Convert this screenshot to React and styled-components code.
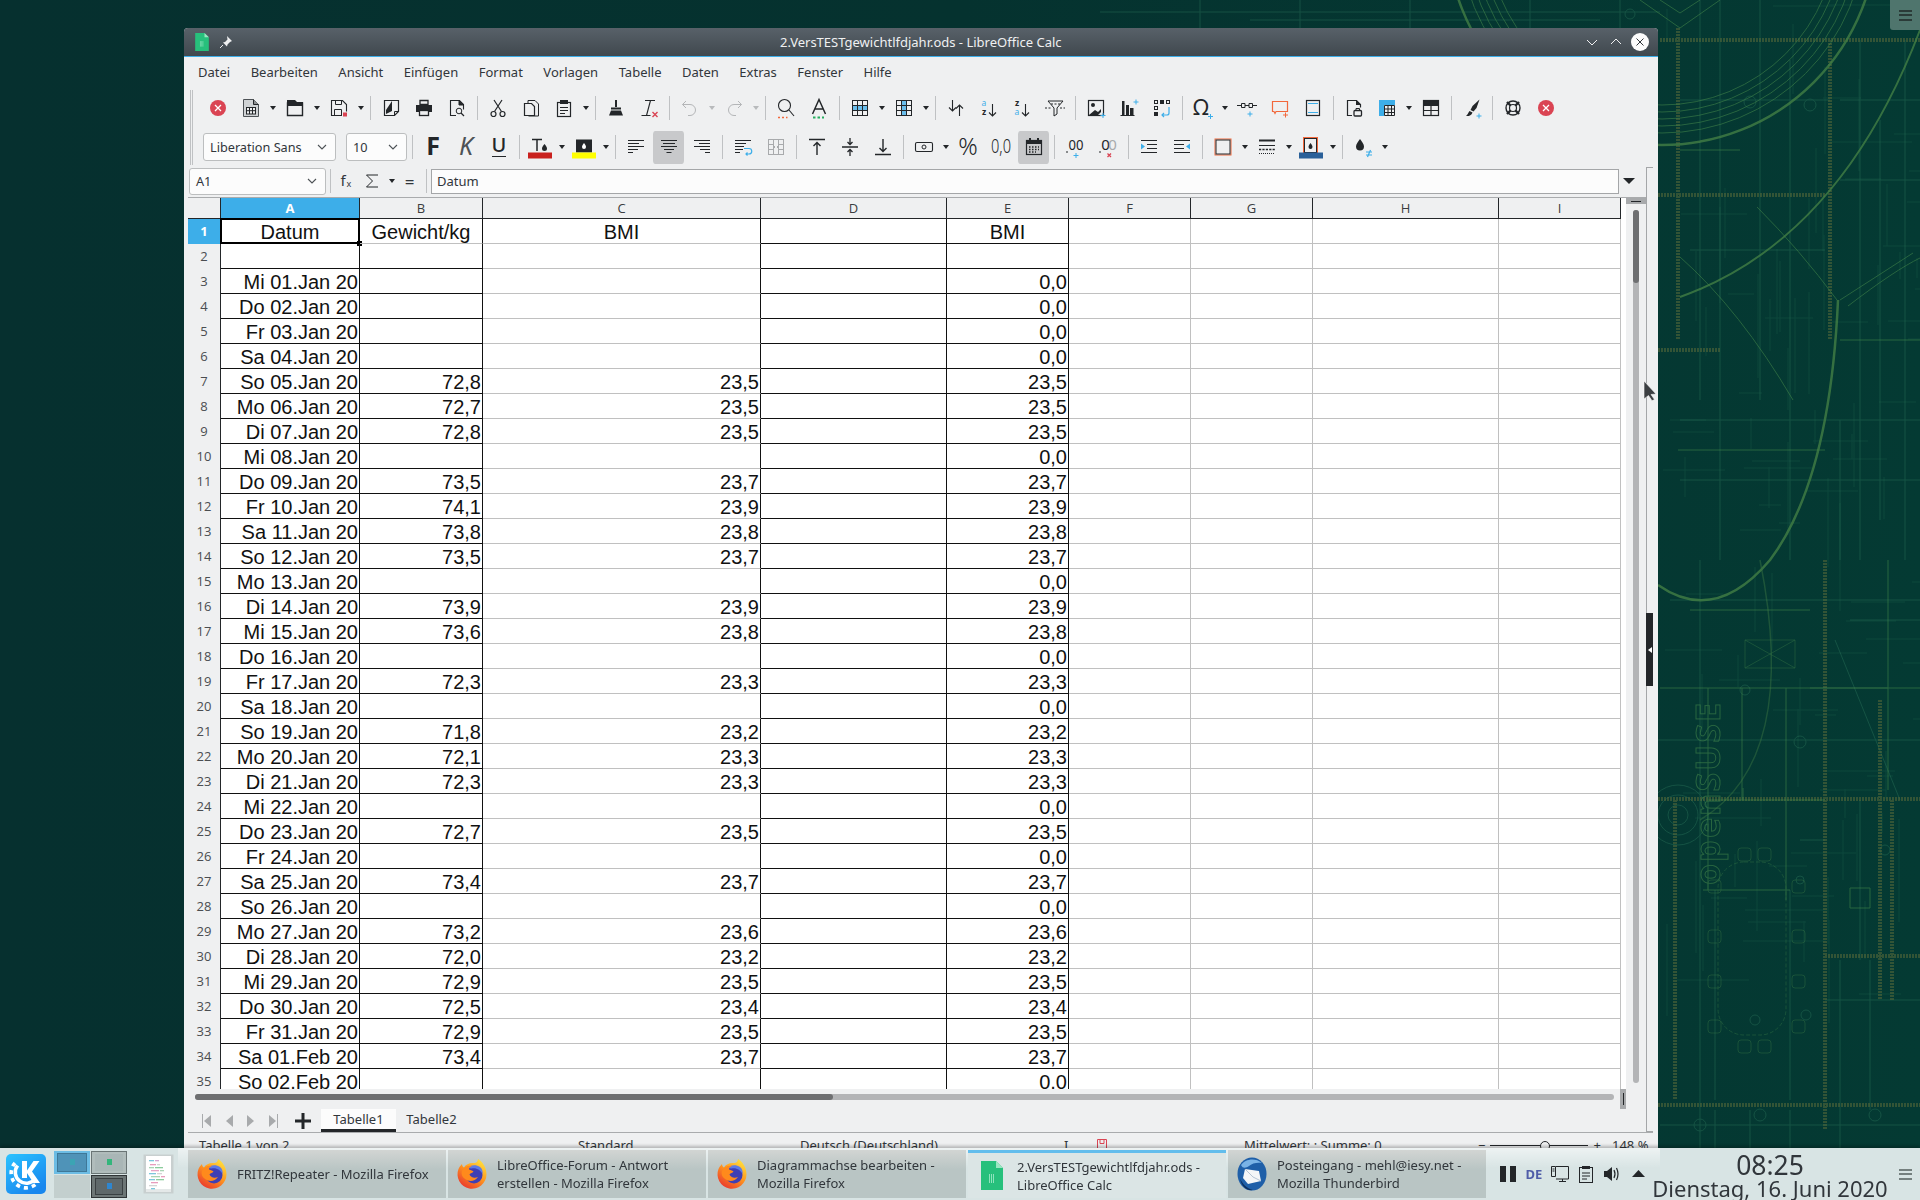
import React from 'react'
import styled, { createGlobalStyle } from 'styled-components'

const GlobalStyle = createGlobalStyle`
  html, body { margin: 0; padding: 0; background: #05322f; }
  * { box-sizing: border-box; }
  body { font-family: "Noto Sans", sans-serif; font-size: 13px; color: #31363b; }
`

const Desktop = styled.div`
  width: 1920px;
  height: 1200px;
  display: flex;
  flex-direction: column;
  overflow: hidden;
`
const Workspace = styled.div`
  position: relative;
  flex: 1;
  overflow: hidden;
  background: linear-gradient(90deg, #06302f 0%, #05322f 50%, #043a33 100%);
`
const Wallpaper = styled.svg`
  position: absolute;
  left: 0;
  top: 0;
  width: 1920px;
  height: 1148px;
`
const Toolbox = styled.div`
  position: absolute;
  right: 0;
  top: 0;
  width: 30px;
  height: 30px;
  background: #4f756d;
  border-bottom-left-radius: 3px;
  display: flex;
  align-items: center;
  justify-content: center;
`
const Bars = styled.div`
  width: 13px;
  height: 11px;
  border-top: 2px solid ${p => p.$color};
  border-bottom: 2px solid ${p => p.$color};
  position: relative;
  &::after {
    content: '';
    position: absolute;
    left: 0;
    right: 0;
    top: 2.5px;
    height: 2px;
    background: ${p => p.$color};
  }
`

/* window */
const Window = styled.div`
  position: absolute;
  left: 184px;
  top: 28px;
  width: 1474px;
  height: 1150px;
  background: #eff0f1;
  border-radius: 4px 4px 0 0;
  display: flex;
  flex-direction: column;
`
const TitleBar = styled.div`
  position: relative;
  flex: 0 0 29px;
  background: linear-gradient(#586169, #40484e);
  border-bottom: 1px solid #3daee9;
  border-radius: 4px 4px 0 0;
  display: flex;
  align-items: center;
  padding-left: 11px;
  gap: 10px;
`
const TitleText = styled.div`
  position: absolute;
  left: 596px;
  top: 4px;
  color: #eff0f1;
  font-size: 13px;
  line-height: 20px;
  white-space: nowrap;
`
const TitleButtons = styled.div`
  margin-left: auto;
  margin-right: 9px;
  display: flex;
  align-items: center;
  gap: 6px;
`
const MenuBar = styled.div`
  flex: 0 0 31px;
  display: flex;
  align-items: center;
  gap: 20.5px;
  padding: 0 0 2px 14px;
  color: #31363b;
`
const ToolbarGroup = styled.div`
  flex: 0 0 75px;
  margin: 2px 0 2px 6px;
  border-left: 3px double #bfc1c3;
`
const Toolbar = styled.div`
  display: flex;
  align-items: center;
  height: ${p => p.$h}px;
  padding-left: ${p => p.$pad}px;
  padding-top: ${p => p.$top || 0}px;
`
const ToolBtn = styled.div`
  flex: 0 0 33px;
  height: 33px;
  display: flex;
  align-items: center;
  justify-content: center;
  border-radius: 3px;
  background: ${p => (p.$on ? '#c8c9cb' : 'transparent')};
  background-clip: padding-box;
  border-left: ${p => (p.$on ? '1px solid #eff0f1' : '0')};
  border-right: ${p => (p.$on ? '1px solid #eff0f1' : '0')};
`
const Drop = styled.div`
  flex: 0 0 11px;
  display: flex;
  justify-content: center;
  &::after {
    content: '';
    border-left: 3.5px solid transparent;
    border-right: 3.5px solid transparent;
    border-top: 4px solid ${p => (p.$off ? '#b8babc' : '#232629')};
  }
`
const Sep = styled.div`
  flex: 0 0 8px;
  height: 24px;
  display: flex;
  justify-content: center;
  &::after {
    content: '';
    width: 1px;
    background: #bfc1c3;
  }
`
const Combo = styled.div`
  flex: 0 0 ${p => p.$w}px;
  height: ${p => p.$h || 28}px;
  margin-right: ${p => p.$mr || 0}px;
  border: 1px solid #bcbebf;
  border-radius: 3px;
  background: #fcfcfc;
  font-size: 12.7px;
  display: flex;
  align-items: center;
  justify-content: space-between;
  padding: 0 8px 0 6px;
`
const Chevron = styled.svg`
  width: 10px;
  height: 6px;
  fill: none;
  stroke: #4d5256;
  stroke-width: 1.1;
`

const Body = styled.div`
  flex: 0 0 965px;
  display: flex;
`
const LeftCol = styled.div`
  width: 1462px;
  display: flex;
  flex-direction: column;
`
const FormulaRow = styled.div`
  flex: 0 0 30px;
  display: flex;
  align-items: center;
  padding: 0 0 2px 5px;
`
const FormulaBtn = styled.div`
  flex: 0 0 ${p => p.$w}px;
  display: flex;
  justify-content: center;
  font-size: ${p => p.$size || 14}px;
  color: #31363b;
`
const FormulaBox = styled.div`
  flex: 0 0 1188px;
  height: 25px;
  margin-left: 1px;
  background: #fcfcfc;
  border: 1px solid #a4a6a8;
  padding-left: 5px;
  line-height: 22px;
`
const ExpandArrow = styled.div`
  margin-left: 4px;
  border-left: 6px solid transparent;
  border-right: 6px solid transparent;
  border-top: 6px solid #232629;
`
const SheetRow = styled.div`
  flex: 0 0 892px;
  display: flex;
  margin-left: 4px;
  border-top: 1px solid #a9abad;
`
const Sheet = styled.div`
  flex: 0 0 1438px;
  height: 891px;
  overflow: hidden;
  background: #fff;
  display: grid;
  grid-template-columns: 33px 139px 123px 278px 186px 122px 122px 122px 186px 122px 5px;
  grid-auto-rows: 25px;
  grid-template-rows: 21px;
  align-content: start;
`
const ColHead = styled.div`
  background: ${p => (p.$on ? '#3daee9' : '#eff0f1')};
  color: ${p => (p.$on ? '#fff' : '#3a3d40')};
  font-weight: ${p => (p.$on ? 700 : 400)};
  border-right: 1px solid #232629;
  border-bottom: 1px solid #232629;
  text-align: center;
  font-size: 13px;
  line-height: 20px;
  font-family: "Open Sans", sans-serif;
`
const RowHead = styled.div`
  background: ${p => (p.$on ? '#3daee9' : '#eff0f1')};
  color: ${p => (p.$on ? '#fff' : '#4a4d50')};
  font-weight: ${p => (p.$on ? 700 : 400)};
  border-right: 1px solid #232629;
  text-align: center;
  font-size: 13px;
  line-height: 25px;
  font-family: "Open Sans", sans-serif;
`
const Cell = styled.div`
  position: relative;
  font-family: "Liberation Sans", sans-serif;
  font-size: 20px;
  line-height: 27px;
  height: 25px;
  color: #111;
  white-space: nowrap;
  text-align: ${p => p.$align || 'right'};
  padding-right: ${p => (p.$align ? 0 : 1)}px;
  border-right: 1px solid ${p => (p.$soft ? '#c0c0c0' : '#111')};
  border-bottom: 1px solid ${p => (p.$softBottom ? '#c0c0c0' : '#111')};
`
const Cursor = styled.div`
  position: absolute;
  left: -1px;
  top: -1px;
  right: -1px;
  bottom: -1px;
  border: 2px solid #000;
  &::after {
    content: '';
    position: absolute;
    right: -4px;
    bottom: -4px;
    width: 5px;
    height: 5px;
    background: #000;
  }
`
const VScroll = styled.div`
  position: relative;
  flex: 0 0 20px;
  background: #eff0f1;
`
const SplitBtn = styled.div`
  height: 6px;
  background: #a8aaac;
  display: flex;
  align-items: center;
  justify-content: center;
  &::after {
    content: '';
    width: 10px;
    height: 1px;
    background: #232629;
  }
`
const VTrack = styled.div`
  width: 6px;
  height: 873px;
  margin: 6px 0 0 7px;
  border-radius: 3px;
  background: #b3b4b6;
`
const VThumb = styled.div`
  height: 73px;
  border-radius: 3px;
  background: #6e6f71;
`
const HScrollRow = styled.div`
  flex: 0 0 20px;
  margin-left: 4px;
  display: flex;
  align-items: center;
  padding: 0 0 5px 7px;
`
const HTrack = styled.div`
  width: 1419px;
  height: 6px;
  border-radius: 3px;
  background: #b3b4b6;
`
const HThumb = styled.div`
  width: 638px;
  height: 6px;
  border-radius: 3px;
  background: #6e6f71;
`
const SplitV = styled.div`
  flex: 0 0 6px;
  height: 20px;
  margin: 0 0 -5px 6px;
  background: #a8aaac;
  display: flex;
  justify-content: center;
  align-items: center;
  &::after {
    content: '';
    width: 1px;
    height: 12px;
    background: #232629;
  }
`
const TabRow = styled.div`
  flex: 0 0 23px;
  display: flex;
  align-items: stretch;
  padding-left: 8px;
  margin-left: 4px;
`
const NavBtn = styled.div`
  flex: 0 0 ${p => p.$w || 22}px;
  display: flex;
  align-items: center;
  justify-content: center;
  transform: ${p => (p.$flip ? 'scaleX(-1)' : 'none')};
`
const Tab = styled.div`
  flex: 0 0 ${p => p.$w}px;
  text-align: center;
  line-height: 20px;
  background: ${p => (p.$on ? '#fcfcfc' : 'transparent')};
  border-bottom: 3px solid ${p => (p.$on ? '#232629' : 'transparent')};
  color: #31363b;
`
const Sidebar = styled.div`
  position: relative;
  width: 7px;
  border: 1px solid #a4a6a8;
  border-right: 0;
`
const DeckHandle = styled.div`
  position: absolute;
  left: -1px;
  top: 445px;
  width: 7px;
  height: 73px;
  background: #232629;
  display: flex;
  align-items: center;
  justify-content: center;
  &::after {
    content: '';
    border-top: 3px solid transparent;
    border-bottom: 3px solid transparent;
    border-right: 4px solid #fff;
  }
`
const StatusBar = styled.div`
  display: flex;
  margin: 0 5px 0 4px;
  border-top: 1px solid #a9abad;
  padding: 3px 0 0 11px;
  line-height: 18px;
  white-space: nowrap;
`
const StatusCell = styled.div`
  flex: 0 0 ${p => p.$w}px;
  display: flex;
  align-items: center;
`
const ZoomLine = styled.div`
  position: relative;
  width: 98px;
  height: 1px;
  margin: 0 5px;
  background: #232629;
  &::after {
    content: '';
    position: absolute;
    left: 50px;
    top: -4px;
    width: 8px;
    height: 8px;
    border: 1px solid #232629;
    border-radius: 50%;
    background: #eff0f1;
  }
`
const MouseCursor = styled.svg`
  position: absolute;
  left: 1643px;
  top: 381px;
  width: 14px;
  height: 20px;
`

/* panel */
const Panel = styled.div`
  position: relative;
  flex: 0 0 52px;
  background: #d8e4e4;
  box-shadow: 0 -2px 3px rgba(0, 0, 0, 0.25);
  display: flex;
  align-items: center;
  padding-left: 6px;
`
const PanelSheen = styled.div`
  position: absolute;
  left: 178px;
  top: 0;
  width: 1482px;
  height: 20px;
  background: linear-gradient(rgba(255, 255, 255, 0.55), rgba(255, 255, 255, 0));
`
const Pager = styled.div`
  position: relative;
  flex: 0 0 73px;
  height: 47px;
  margin-left: 8px;
  display: grid;
  grid-template-columns: 36px 36px;
  grid-template-rows: 23px 23px;
  gap: 1px;
`
const Desk = styled.div`
  background: ${p => p.$bg};
  border: ${p => (p.$border ? `1px solid ${p.$border}` : '0')};
  padding: ${p => (p.$pad ? '2px 3px' : 0)};
  display: flex;
  align-items: center;
  justify-content: center;
`
const DeskWindow = styled.div`
  width: 100%;
  height: 100%;
  background: ${p => p.$bg};
  border: 1px solid ${p => p.$border};
  display: flex;
  align-items: center;
  justify-content: center;
  &::after {
    content: '';
    width: 5px;
    height: 6px;
    background: ${p => p.$dot};
  }
`
const NotesBox = styled.div`
  position: relative;
  margin-left: 16px;
`
const Tasks = styled.div`
  position: relative;
  flex: 0 0 1298px;
  margin-left: 14px;
  display: flex;
  gap: 2px;
`
const Task = styled.div`
  flex: 0 0 258px;
  height: 48px;
  display: flex;
  align-items: center;
  gap: 10px;
  padding-left: 9px;
  line-height: 18px;
  color: #31363b;
  background: ${p => (p.$on ? '#dbe5e5' : 'linear-gradient(#d2d5d3, #b9c5c4 40%)')};
  border-top: ${p => (p.$on ? '3px solid #62bdec' : '0')};
`
const TaskIconBox = styled.div`
  flex: 0 0 30px;
  display: flex;
  justify-content: center;
`
const Tray = styled.div`
  position: relative;
  flex: 0 0 156px;
  margin-left: 9px;
  display: flex;
`
const TrayItem = styled.div`
  flex: 0 0 26px;
  display: flex;
  justify-content: center;
  align-items: center;
  height: 24px;
  font-size: 13px;
  font-weight: 700;
  color: #4f5da8;
`
const Clock = styled.div`
  position: relative;
  flex: 0 0 240px;
  align-self: flex-start;
  padding-top: 5px;
  text-align: center;
  color: #31363b;
  white-space: nowrap;
  margin-left: -1px;
`
const ClockTime = styled.div`
  font-size: 26.5px;
  line-height: 24px;
`
const ClockDate = styled.div`
  font-size: 22px;
  line-height: 22px;
`
const PanelMenu = styled.div`
  flex: 0 0 31px;
  display: flex;
  justify-content: center;
`

/* toolbar icons, all on a 24 grid */
const Svg = styled.svg`
  width: ${p => p.$w || 24}px;
  height: ${p => p.$h || 24}px;
  fill: none;
  stroke: #232629;
  stroke-width: 1;
  display: block;
  flex: none;
  overflow: visible;
`
const D = '#232629'
const B = '#3daee9'
const R = '#da4453'
const O = '#f2683c'
const Plus = ({ x = 19, y = 20, c = B }) => <path d={`M${x - 2.5} ${y}h5M${x} ${y - 2.5}v5`} stroke={c} />
const Lines = ({ rows }) => rows.map(([x, y, w], i) => <path key={i} d={`M${x} ${y}h${w}`} />)
const T = ({ x = 12, y = 18, s = 18, w, c = D, f, children, ...r }) => (
  <text x={x} y={y} fontSize={s} fontWeight={w} fill={c} stroke="none" textAnchor="middle" fontFamily={f || '"Noto Sans", sans-serif'} {...r}>
    {children}
  </text>
)
const Table = ({ hatch }) => (
  <>
    {hatch === 'row' && <rect x="4" y="9" width="16" height="6" fill={B} opacity=".75" stroke="none" />}
    {hatch === 'col' && <rect x="9" y="4" width="6" height="16" fill={B} opacity=".75" stroke="none" />}
    <rect x="4.5" y="4.5" width="15" height="15" />
    <path d="M4.5 9.5h15M4.5 14.5h15M9.5 4.5v15M14.5 4.5v15" />
  </>
)
const CloseIcon = () => (
  <>
    <circle cx="12" cy="12" r="8" fill={R} stroke="none" />
    <path d="M9 9l6 6M15 9l-6 6" stroke="#fff" strokeWidth="1.3" />
  </>
)

const icons = {
  close: <CloseIcon />,
  newCalc: (
    <>
      <path d="M4.5 3.5h10l5 5v12h-15z" fill="#d0d3d5" stroke="#4d5256" />
      <path d="M14.5 3.5v5h5" fill="#8d9092" />
      <rect x="7.5" y="11.5" width="9" height="6.5" fill="#eff0f1" />
      <path d="M7.5 14.7h9M10.5 11.5v6.5M13.5 11.5v6.5" />
    </>
  ),
  open: (
    <>
      <path d="M4.5 7h15v12.5h-15z" strokeWidth="1.4" />
      <path d="M4 4h8l2 2h6v4H4z" fill={D} stroke="none" />
    </>
  ),
  save: (
    <>
      <path d="M15 19.5H4.5v-15h11l4 4v7" strokeWidth="1.1" />
      <path d="M8.500 4.500v4h6v-4M7.500 19.500v-6h7v6" />
      <rect x="16" y="16.5" width="4" height="4" fill={R} stroke="none" />
    </>
  ),
  export: (
    <>
      <path d="M5.5 4.5h14v11l-4 4h-10z" strokeWidth="1.2" />
      <path d="M7 14l6-9v10l-6 3z" fill={D} stroke="none" />
      <path d="M15.5 19.5v-4h4" />
    </>
  ),
  print: (
    <>
      <path d="M8 4.5h8v4H8z" strokeWidth="1.3" />
      <path d="M4 9h16v7H4z" fill={D} stroke="none" />
      <rect x="7.5" y="14.5" width="9" height="5" fill="#eff0f1" strokeWidth="1.3" />
    </>
  ),
  preview: (
    <>
      <path d="M11 19.500H5.500v-15h9l4 4v5" strokeWidth="1.1" />
      <path d="M14 4.500v4.500h4.500z" fill={D} />
      <circle cx="14" cy="15" r="2.8" />
      <path d="M16 17l3 3" strokeWidth="1.3" />
    </>
  ),
  cut: (
    <>
      <circle cx="7.5" cy="18" r="2.5" strokeWidth="1.2" />
      <circle cx="16.5" cy="18" r="2.5" strokeWidth="1.2" />
      <path d="M8.5 15.5L16 4M15.5 15.5L8 4" strokeWidth="1.2" />
    </>
  ),
  copy: (
    <>
      <path d="M9 8V4.5h7l3.5 3.5v12H9.5" />
      <path d="M5.5 7.5h7l3 3v9h-10z" fill="#eff0f1" strokeWidth="1.2" />
    </>
  ),
  paste: (
    <>
      <rect x="5.5" y="6.5" width="13" height="14" strokeWidth="1.2" />
      <path d="M8 4h8v4H8z" fill={D} stroke="none" />
      <path d="M8 11.5h8M8 14.5h8M8 17.5h5" />
    </>
  ),
  clone: (
    <>
      <path d="M11 4h2v7h-2z" fill={D} stroke="none" />
      <path d="M7 11.5h10v2H7zM7 14.5h10l2 5H5z" fill={D} stroke="none" />
    </>
  ),
  clear: (
    <>
      <path d="M8 4.5h10M13.5 4.5l-4 15M4.5 19.5h9" strokeWidth="1.1" />
      <path d="M15.5 16l5 5M20.5 16l-5 5" stroke={R} strokeWidth="1.4" />
    </>
  ),
  undo: <path d="M8 5L4.5 8.5 8 12M4.5 8.5H12a5.5 5.5 0 0 1 0 11H10" stroke="#b4b6b8" />,
  redo: <path d="M16 5l3.5 3.5L16 12M19.5 8.5H12a5.5 5.5 0 0 0 0 11h2" stroke="#b4b6b8" />,
  find: (
    <>
      <circle cx="10.5" cy="9.5" r="6" strokeWidth="1.1" />
      <path d="M15 14l5 6" strokeWidth="1.1" />
      <path d="M4 21.5h9.500" stroke={O} strokeDasharray="2 2" strokeWidth="1.6" />
    </>
  ),
  fontwork: (
    <>
      <path d="M5.5 18L12 3.500 18.500 18M8 13h8" strokeWidth="1.5" />
      <path d="M6 21.5h11" stroke="#27ae60" strokeDasharray="2.5 2" strokeWidth="1.8" />
    </>
  ),
  rows: <Table hatch="row" />,
  cols: <Table hatch="col" />,
  sort: <path d="M8.5 4v11M5 11.5l3.5 3.5 3.5-3.5M15.5 20V9M12 12.5L15.5 9l3.500 3.500" strokeWidth="1.1" />,
  sortAz: (
    <>
      <T x={7} y={10} s={8.5} c={B}>a</T>
      <T x={7} y={19} s={8.5} w={700}>z</T>
      <path d="M15.5 8v12M12 16.500l3.500 3.500 3.500-3.500" strokeWidth="1.1" />
    </>
  ),
  sortZa: (
    <>
      <T x={7} y={10} s={8.5} w={700}>z</T>
      <T x={7} y={19} s={8.5} c={B}>a</T>
      <path d="M15.5 8v12M12 16.500l3.500 3.500 3.500-3.500" strokeWidth="1.1" />
    </>
  ),
  filter: (
    <>
      <path d="M5 5h15l-6 7v6l-3 2v-8z" />
      <path d="M8 8h9M2 12h6M17 12h5" strokeDasharray="2 1.5" />
    </>
  ),
  image: (
    <>
      <rect x="4.5" y="4.5" width="15" height="15" strokeWidth="1.2" />
      <circle cx="9" cy="9" r="2" fill={D} stroke="none" />
      <path d="M5 19l6-5 3 2 3-3v3l-3 3z" fill={D} stroke="none" />
      <Plus x={19} y={19.5} />
    </>
  ),
  chart: (
    <>
      <path d="M3.5 19.5h14" />
      <path d="M5 5h2.500v14H5zM9 9h3v10H9zM13 12h3.500v7H13z" fill={D} stroke="none" />
      <Plus x={19} y={6} />
    </>
  ),
  pivot: (
    <>
      <rect x="4.5" y="4.5" width="3" height="3" />
      <rect x="10" y="4" width="4" height="4" fill={D} stroke="none" />
      <rect x="16.5" y="4.5" width="3" height="3" />
      <rect x="4.5" y="10.5" width="3" height="3" />
      <rect x="4" y="16" width="4" height="4" fill={D} stroke="none" />
      <path d="M19 11v6a2 2 0 0 1-2 2h-5M14 17l-2 2 2 2" stroke={B} strokeWidth="1.2" />
    </>
  ),
  omega: (
    <>
      <T x={10} y={19} s={22}>Ω</T>
      <Plus x={19.5} y={20.5} />
    </>
  ),
  link: (
    <>
      <path d="M2 9.5h4M10 9.5h4M18 9.5h4M6.500 7.500h3.500v4H6.500zM14 7.500h3.500v4H14z" />
      <Plus x={15} y={18} />
    </>
  ),
  comment: (
    <>
      <path d="M4.5 5.5h15v10H8l-1 2-1-2H4.500z" stroke={O} strokeWidth="1.2" />
      <Plus x={17.5} y={19} c={O} />
    </>
  ),
  header: (
    <>
      <rect x="5.5" y="4.5" width="13" height="15" strokeWidth="1.2" />
      <path d="M7 7.5h10M7 16.5h10" stroke={B} />
    </>
  ),
  docLock: (
    <>
      <path d="M10 19.500H5.500v-15h9l4 4v3" strokeWidth="1.2" />
      <path d="M14 4v5h5z" fill={D} stroke="none" />
      <rect x="12" y="14.5" width="7.5" height="5.5" rx="1" strokeWidth="1.3" />
      <path d="M14 14.5v-2h3.500v2" />
    </>
  ),
  table: (
    <>
      <path d="M4 4h16v5H9v11H4z" fill={B} stroke="none" />
      <path d="M9.500 9.500h10v10h-10zM13 9.500v10M16.500 9.500v10M9.500 13h10M9.500 16.500h10" />
    </>
  ),
  freeze: (
    <>
      <rect x="4" y="4" width="16" height="6" fill={D} stroke="none" />
      <rect x="4.5" y="4.5" width="15" height="15" strokeWidth="1.2" />
      <path d="M4.5 14.5h15M12 10v9.500" strokeWidth="1.2" />
    </>
  ),
  brush: (
    <>
      <path d="M19.5 3.5l-7 6.500-2 4 3 1.500 3-3.500z" fill={D} stroke="none" />
      <path d="M9.5 15l3 1.500c-1 3-4 4-6.500 3.500 1.500-1 2-3 3.500-5z" fill={D} stroke="none" />
      <Plus x={19} y={20} />
    </>
  ),
  help: (
    <>
      <circle cx="12" cy="12" r="7" strokeWidth="1.4" />
      <circle cx="12" cy="12" r="3.5" strokeWidth="1.2" />
      <path d="M6 6l3.500 3.500M18 6l-3.500 3.500M6 18l3.500-3.500M18 18l-3.500-3.500" strokeWidth="2.4" />
    </>
  ),
  bold: <T x={12} y={20} s={25} w={700}>F</T>,
  italic: <T x={12} y={20} s={25} fontStyle="italic" fill="#4d5256">K</T>,
  underline: (
    <>
      <T x={12} y={17} s={20} w={500}>U</T>
      <path d="M5 21.5h14" />
    </>
  ),
  fontColor: (
    <>
      <path d="M4 4.5h10M9 4.500V16" strokeWidth="1.5" />
      <path d="M16.5 9c1.500 2 2.500 3 2.500 4.500a2.500 2.500 0 0 1-5 0c0-1.500 1-2.500 2.500-4.500z" fill={D} stroke="none" />
      <rect x="0" y="17.5" width="24" height="6" fill="#c9211e" stroke="none" />
    </>
  ),
  highlight: (
    <>
      <rect x="4" y="4.5" width="16" height="13" fill={D} stroke="none" />
      <path d="M12 8c1 1.500 2 2.500 2 4a2 2 0 0 1-4 0c0-1.500 1-2.500 2-4z" fill="#fff" stroke="none" />
      <rect x="0" y="17.5" width="24" height="6" fill="#ffff00" stroke="none" />
    </>
  ),
  left: <Lines rows={[[4, 5.5, 16], [4, 8.5, 11], [4, 11.5, 16], [4, 14.5, 10], [4, 17.5, 5]]} />,
  center: <Lines rows={[[4, 5.5, 16], [6, 8.5, 12], [4, 11.5, 16], [7, 14.5, 10], [9.5, 17.5, 5]]} />,
  right: <Lines rows={[[4, 5.5, 16], [9, 8.5, 11], [4, 11.5, 16], [10, 14.5, 10], [15, 17.5, 5]]} />,
  wrap: (
    <>
      <Lines rows={[[4, 5.5, 16], [4, 8.5, 11], [4, 11.5, 9], [4, 14.5, 8], [4, 17.5, 5]]} />
      <path d="M13 13.5h5a2 2 0 0 1 0 5.500h-3M16.500 17.500L15 19l1.500 1.500" stroke={B} strokeWidth="1.2" />
    </>
  ),
  merge: (
    <>
      <rect x="4.5" y="4.5" width="15" height="15" stroke="#a8aaac" />
      <path d="M4.500 9.500h5M14.500 9.500h5M4.500 14.500h5M14.500 14.500h5M9.500 4.500v15M14.500 4.500v15" stroke="#a8aaac" />
      <path d="M11 12h-1M13 12h1" stroke="#a8aaac" strokeWidth="2" />
    </>
  ),
  top: <path d="M4 4.500h16M12 20V7.500M8.500 11L12 7.500l3.500 3.500" strokeWidth="1.4" />,
  middle: <path d="M4 12h16M12 3v6.500M9.500 7l2.500 2.500L14.500 7M12 21v-6.500M9.500 17l2.500-2.500 2.500 2.500" strokeWidth="1.3" />,
  bottom: <path d="M4 19.500h16M12 4v12.500M8.500 13l3.500 3.500 3.500-3.500" strokeWidth="1.4" />,
  currency: (
    <>
      <rect x="3.5" y="7.5" width="17" height="9" rx="1.5" strokeWidth="1.1" />
      <circle cx="12" cy="12" r="2" />
    </>
  ),
  percent: <T x={12} y={20} s={24} fontWeight={300}>%</T>,
  number: <T x={12} y={18} s={20} fontWeight={300} textLength="20" lengthAdjust="spacingAndGlyphs">0,0</T>,
  date: (
    <>
      <rect x="4.5" y="5.5" width="15" height="14" strokeWidth="1.2" />
      <path d="M4 5h16v4H4zM7 3h2v3H7zM15 3h2v3h-2z" fill={D} stroke="none" />
      <path d="M7 12h10M7 14.500h10M7 17h7" strokeDasharray="1.5 1.5" strokeWidth="1.4" />
    </>
  ),
  addDec: (
    <>
      <T x={13} y={15} s={15} textLength="15" lengthAdjust="spacingAndGlyphs">00</T>
      <path d="M4 18v-2" />
      <Plus x={13} y={20.5} />
    </>
  ),
  delDec: (
    <>
      <T x={9.5} y={15} s={15}>0</T>
      <T x={16.5} y={15} s={15} c="#a8aaac">0</T>
      <path d="M4 18v-2" />
      <path d="M11.500 18.500l3.500 3.500M15 18.500L11.500 22" stroke={R} strokeWidth="1.3" />
    </>
  ),
  indent: (
    <>
      <Lines rows={[[4, 5.5, 16], [10, 9.5, 10], [10, 13.5, 10], [4, 17.5, 16]]} />
      <path d="M4 8.500l4 3-4 3z" fill={B} stroke="none" />
    </>
  ),
  dedent: (
    <>
      <Lines rows={[[4, 5.5, 16], [4, 9.5, 10], [4, 13.5, 10], [4, 17.5, 16]]} />
      <path d="M20 8.500l-4 3 4 3z" fill={B} stroke="none" />
    </>
  ),
  border: (
    <>
      <rect x="4" y="4" width="16" height="16" fill="#eff0f1" stroke={O} strokeWidth="1" />
      <rect x="5" y="5" width="14" height="14" strokeWidth="1" />
    </>
  ),
  lineStyle: (
    <>
      <path d="M4 5.500h16" strokeWidth="2" />
      <path d="M4 10.500h16" />
      <path d="M4 14.500h16" strokeWidth="1.5" strokeDasharray="2.2 1.2" />
      <path d="M4 18.500h16" strokeDasharray="1 1" />
    </>
  ),
  bgColor: (
    <>
      <rect x="4.5" y="2.5" width="14" height="16" stroke={O} strokeWidth="1" />
      <rect x="5.5" y="3.5" width="12" height="14" />
      <path d="M11.500 8c1 1.500 2 2.500 2 4a2 2 0 0 1-4 0c0-1.500 1-2.500 2-4z" fill={D} stroke="none" />
      <rect x="0" y="17.5" width="24" height="6" fill="#2a6099" stroke="none" />
    </>
  ),
  cond: (
    <>
      <path d="M9 4c2 3 4 5 4 7.500a4 4 0 0 1-8 0C5 9 7 7 9 4z" fill={D} stroke="none" />
      <path d="M15 17h6M15 20h6M19.500 15l-3 7" stroke={B} strokeWidth="1.2" />
    </>
  ),
}

const Tool = ({ name, on }) => (
  <ToolBtn $on={on}>
    <Svg viewBox="0 0 24 24">{icons[name]}</Svg>
  </ToolBtn>
)

const bar1 = [
  'close', 'newCalc', 'v', 'open', 'v', 'save', 'v', '|', 'export', 'print', 'preview', '|', 'cut', 'copy', 'paste', 'v', '|',
  'clone', 'clear', '|', 'undo', 'o', 'redo', 'o', '|', 'find', 'fontwork', '|', 'rows', 'v', 'cols', 'v', '|', 'sort', 'sortAz',
  'sortZa', 'filter', '|', 'image', 'chart', 'pivot', '|', 'omega', 'v', 'link', 'comment', 'header', '|', 'docLock', 'table', 'v',
  'freeze', '|', 'brush', '|', 'help', 'close',
]
const bar2 = [
  '|', 'bold', 'italic', 'underline', '|', 'fontColor', 'v', 'highlight', 'v', '|', 'left', 'center*', 'right', '|', 'wrap', 'merge',
  '|', 'top', 'middle', 'bottom', '|', 'currency', 'v', 'percent', 'number', 'date*', '|', 'addDec', 'delDec', '|', 'indent', 'dedent',
  '|', 'border', 'v', 'lineStyle', 'v', 'bgColor', 'v', '|', 'cond', 'v',
]
const renderBar = items =>
  items.map((it, i) => {
    if (it === '|') return <Sep key={i} />
    if (it === 'v') return <Drop key={i} />
    if (it === 'o') return <Drop key={i} $off />
    const on = it.endsWith('*')
    return <Tool key={i} name={on ? it.slice(0, -1) : it} on={on} />
  })

const ChevronDown = () => (
  <Chevron viewBox="0 0 10 6">
    <path d="M1 1l4 4 4-4" />
  </Chevron>
)

const CalcIcon = ({ w, h }) => (
  <Svg $w={w} $h={h} viewBox="0 0 22 29">
    <path d="M0 0h15l7 7v22H0z" fill="#27c07c" stroke="none" />
    <path d="M15 0l7 7h-7z" fill="#9be6c2" stroke="none" />
    <path d="M8.500 13v9M10.500 13v9M12.500 13v9" stroke="#8fe3bd" strokeWidth="1" />
  </Svg>
)
const Firefox = () => (
  <Svg $w={30} $h={32} viewBox="0 0 30 32">
    <defs>
      <linearGradient id="ffOuter" x1="0.8" y1="0.1" x2="0.2" y2="1">
        <stop offset="0" stopColor="#ffd83a" />
        <stop offset="0.4" stopColor="#ff9a1f" />
        <stop offset="1" stopColor="#e8322f" />
      </linearGradient>
    </defs>
    <path d="M21 1c5 3 8.500 9 8.500 15.500A14.500 14.500 0 1 1 1.500 11c1-2 2-3.500 3.500-5 0 2 1 3 2 3.500C9 6 13 4.500 17 5c2 .2 4-1.500 4-4z" fill="url(#ffOuter)" stroke="none" />
    <circle cx="17" cy="17" r="8.500" fill="#3f3fb4" stroke="none" />
    <path d="M10 10c3-3 9-4 13-1 2 1.500 3 4 2.500 7-2-4-6-6.500-11-5.500z" fill="#5d7be6" stroke="none" />
    <path d="M5 13c2-4 6-6 10-5-2 1-3.500 2-3 3.500 2 1 4 1 4.500 2-1 1.500-3 1.500-4 3 1 3 5 4 8.500 2.500-3 4.500-9 5-13 2C5 19 4 16 5 13z" fill="#ff8a1c" stroke="none" />
  </Svg>
)
const Thunderbird = () => (
  <Svg $w={30} $h={34} viewBox="0 0 30 34">
    <ellipse cx="15" cy="17" rx="14.5" ry="16.5" fill="#1f5fa8" stroke="none" />
    <path d="M4 8c4-6 14-8 21-2-4-1-10 0-13 3-3 2-6 3-8-1z" fill="#7ab3e6" stroke="none" />
    <path d="M8 12l14 2 2 10-13 3-5-6z" fill="#f4f6f8" stroke="none" />
    <path d="M8 12l8 8 8 4" stroke="#b5c4d4" />
    <path d="M3 22c3 5 6 9 13 11-6 1-11-3-13-11z" fill="#0e2f5c" stroke="none" />
  </Svg>
)
const KdeLogo = () => (
  <Svg $w={40} $h={40} viewBox="0 0 40 40">
    <defs>
      <linearGradient id="kdeBg" x1="0" y1="0" x2="0.6" y2="1">
        <stop offset="0" stopColor="#2bc3ff" />
        <stop offset="1" stopColor="#1887ee" />
      </linearGradient>
    </defs>
    <rect x="0" y="0" width="40" height="40" rx="5" fill="url(#kdeBg)" stroke="none" />
    <path d="M11.600 11.500A10.500 10.500 0 1 0 29 25" stroke="#fff" strokeWidth="3.6" />
    <path d="M9 9A14 14 0 1 0 31 29" stroke="#fff" strokeWidth="3.6" strokeDasharray="4 4" />
    <path d="M16 7h5v9.500L27.500 7h6L26 17.500 34 29h-6.500L21 19v5h-5z" fill="#fff" stroke="none" />
  </Svg>
)
const Notes = () => (
  <Svg $w={31} $h={40} viewBox="0 0 31 40">
    <rect x="0.5" y="0.5" width="30" height="39" fill="#c8cfcf" stroke="none" />
    <rect x="3" y="2" width="25" height="33" fill="#fff" stroke="none" />
    <rect x="3" y="35" width="25" height="3" fill="#e4e8e8" stroke="none" />
    {[
      [6, 6, 5, '#7cc6dc'], [12, 6, 4, '#d4a6d0'], [7, 10, 6, '#e79cbc'], [14, 10, 3, '#d4d4d4'], [6, 13, 5, '#a9d4b4'],
      [12, 13, 8, '#8bcc9c'], [8, 16, 8, '#e6a5c6'], [17, 16, 4, '#a9d4b4'], [6, 19, 7, '#7cc6dc'], [14, 19, 5, '#d4d4d4'],
      [8, 22, 9, '#a9d4b4'], [18, 22, 4, '#e79cbc'], [6, 25, 6, '#7cc6dc'], [13, 25, 8, '#8bcc9c'], [8, 28, 7, '#e79cbc'],
      [6, 31, 8, '#d4d4d4'], [8, 34, 4, '#7cc6dc'],
    ].map(([x, y, w, c], i) => (
      <rect key={i} x={x} y={y} width={w} height="1.3" fill={c} stroke="none" />
    ))}
  </Svg>
)

const WALL = '#5a6b3a'
const GREEN = '#468a4c'
const FAINT = '#2f7a5e'
const walls = [
  'M1660 40H1920', 'M1678 28V340', 'M1830 40V340', 'M1658 195H1825', 'M1825 560V1130', 'M1675 800V1100', 'M1658 1105H1920',
  'M1658 799H1920', 'M1825 956H1920', 'M1892 800V1000', 'M1658 350H1720', 'M1900 0V30', 'M1880 700V1000',
]
const greens = [
  'M1660 688H1888', 'M1742 688V800', 'M1708 688V890', 'M1703 890H1790', 'M1708 800H1825', 'M1810 688H1920', 'M1888 560V790',
  'M1740 150H1680', 'M1640 0L1680 28L1720 0', 'M1660 0L1680 13L1700 0', 'M1757 207Q1800 250 1837 300', 'M1840 300L1913 253',
  'M1680 257Q1740 310 1793 400', 'M1848 306Q1895 270 1920 258', 'M1840 340H1920', 'M1678 450H1825',
  'M1690 610H1810', 'M1743 788V800', 'M1786 688V900',
]
const faints = [
  'M1700 0V400', 'M1720 0V560', 'M1760 0V400', 'M1790 60V560', 'M1860 40V560', 'M1880 120V520', 'M1905 40V560', 'M1680 100H1830',
  'M1690 250H1825', 'M1840 100H1920', 'M1840 180H1920', 'M1680 420H1920', 'M1680 480H1920', 'M1840 420V560', 'M1670 600H1920',
  'M1700 560V1148', 'M1715 890V1100', 'M1790 890V1100', 'M1750 1110V1148', 'M1790 1110V1148', 'M1715 1110V1148', 'M1840 960V1148',
  'M1870 960V1110', 'M1658 740H1920', 'M1825 1000H1920', 'M1660 1125H1920', 'M1200 0V28', 'M1300 0V28', 'M1410 0V28', 'M1530 0V28',
  'M1620 0V28', 'M1100 12H1660', 'M1250 20H1600', 'M1860 800V960', 'M1850 620H1920', 'M1800 840H1825', 'M1835 640L1900 800',
]
// thin drafting lines, a seeded run so the picture stays the same on every load
const fine = []
let seed = 17
const next = n => {
  seed = (seed * 137 + 59) % 1009
  return seed % n
}
for (let i = 0; i < 110; i++) {
  const x = 1660 + next(260)
  const y = next(1148)
  fine.push(i % 2 ? `M${x} ${y}h${20 + next(70)}` : `M${x} ${y}v${20 + next(90)}`)
}
const chairs = [
  [1708, 880], [1708, 930], [1708, 975], [1708, 1020], [1792, 880], [1792, 930], [1792, 975], [1792, 1020], [1738, 1040], [1758, 1040],
  [1738, 848], [1758, 848],
]
const rings = [
  [1678, 815, 30], [1678, 815, 20], [1678, 815, 10], [1745, 690, 5], [1800, 742, 6], [1885, 850, 5], [1755, 1020, 5], [1806, 1015, 5],
  [1810, 105, 6], [1750, 102, 6], [1630, 14, 5], [1760, 1115, 6], [1875, 1115, 6], [1700, 1125, 6], [1800, 880, 4],
]
const arcs = [175, 182, 189, 196, 203]

const WallpaperArt = () => (
  <Wallpaper viewBox="0 0 1920 1148" fill="none">
    <g stroke={FAINT} strokeWidth="1" opacity=".22">
      {fine.map((d, i) => <path key={i} d={d} />)}
    </g>
    <g stroke={FAINT} strokeWidth="1" opacity=".4">
      {faints.map(d => <path key={d} d={d} />)}
      {rings.map(([x, y, r]) => <circle key={`${x}-${y}-${r}`} cx={x} cy={y} r={r} />)}
    </g>
    <g stroke={WALL} strokeWidth="4" opacity=".55" strokeDasharray="2 1">
      {walls.map(d => <path key={d} d={d} />)}
    </g>
    <g stroke={GREEN} strokeWidth="1" opacity=".55">
      {greens.map(d => <path key={d} d={d} />)}
      {arcs.map(r => <circle key={r} cx="1662" cy="-70" r={r} />)}
      <rect x="1718" y="862" width="68" height="173" rx="26" opacity=".6" strokeDasharray="4 2" />
      {chairs.map(([x, y]) => <rect key={`${x}-${y}`} x={x} y={y} width="13" height="13" rx="3" opacity=".6" />)}
      <path d="M1745 640h50v28h-50zM1745 640l50 28M1795 640l-50 28" opacity=".6" />
      <path d="M1850 888h20v20h-20z" />
      <text transform="translate(1720 885) rotate(-90)" fontFamily="Noto Sans, sans-serif" fontWeight="700" fontSize="34" textLength="182" stroke={GREEN} fill="none">openSUSE</text>
    </g>
    <g stroke="#437f45" fill="none" opacity=".8">
      <circle cx="1662" cy="-70" r="215" strokeWidth="2.5" />
      <path d="M1680 297Q1840 240 1920 30" strokeWidth="2" />
      <path d="M1658 585Q1715 625 1770 560Q1830 480 1838 300" strokeWidth="2.5" />
      <path d="M1760 560Q1800 760 1700 820" strokeWidth="1.5" opacity=".5" />
    </g>
  </Wallpaper>
)

/* sheet data: [day, weight, bmi] */
const days = [
  ['Mi 01.Jan 20'], ['Do 02.Jan 20'], ['Fr 03.Jan 20'], ['Sa 04.Jan 20'], ['So 05.Jan 20', '72,8', '23,5'], ['Mo 06.Jan 20', '72,7', '23,5'],
  ['Di 07.Jan 20', '72,8', '23,5'], ['Mi 08.Jan 20'], ['Do 09.Jan 20', '73,5', '23,7'], ['Fr 10.Jan 20', '74,1', '23,9'],
  ['Sa 11.Jan 20', '73,8', '23,8'], ['So 12.Jan 20', '73,5', '23,7'], ['Mo 13.Jan 20'], ['Di 14.Jan 20', '73,9', '23,9'],
  ['Mi 15.Jan 20', '73,6', '23,8'], ['Do 16.Jan 20'], ['Fr 17.Jan 20', '72,3', '23,3'], ['Sa 18.Jan 20'], ['So 19.Jan 20', '71,8', '23,2'],
  ['Mo 20.Jan 20', '72,1', '23,3'], ['Di 21.Jan 20', '72,3', '23,3'], ['Mi 22.Jan 20'], ['Do 23.Jan 20', '72,7', '23,5'], ['Fr 24.Jan 20'],
  ['Sa 25.Jan 20', '73,4', '23,7'], ['So 26.Jan 20'], ['Mo 27.Jan 20', '73,2', '23,6'], ['Di 28.Jan 20', '72,0', '23,2'],
  ['Mi 29.Jan 20', '72,9', '23,5'], ['Do 30.Jan 20', '72,5', '23,4'], ['Fr 31.Jan 20', '72,9', '23,5'], ['Sa 01.Feb 20', '73,4', '23,7'],
  ['So 02.Feb 20'],
]
const columns = ['A', 'B', 'C', 'D', 'E', 'F', 'G', 'H', 'I']

const Blanks = () => (
  <>
    {[0, 1, 2, 3].map(i => <Cell key={i} $soft $softBottom />)}
    <div />
  </>
)

const SheetGrid = () => (
  <Sheet>
    <ColHead />
    {columns.map((c, i) => <ColHead key={c} $on={i === 0}>{c}</ColHead>)}
    <div />

    <RowHead $on>1</RowHead>
    <Cell $align="center">Datum<Cursor /></Cell>
    <Cell $align="center" $softBottom>Gewicht/kg</Cell>
    <Cell $align="center" $softBottom>BMI</Cell>
    <Cell />
    <Cell $align="center">BMI</Cell>
    <Blanks />

    <RowHead>2</RowHead>
    <Cell />
    <Cell />
    <Cell $softBottom />
    <Cell />
    <Cell />
    <Blanks />

    {days.map(([day, weight, bmi], i) => (
      <React.Fragment key={day}>
        <RowHead>{i + 3}</RowHead>
        <Cell>{day}</Cell>
        <Cell>{weight}</Cell>
        <Cell $softBottom>{bmi}</Cell>
        <Cell />
        <Cell>{bmi || '0,0'}</Cell>
        <Blanks />
      </React.Fragment>
    ))}
  </Sheet>
)

const NavIcon = ({ bar }) => (
  <Svg $w={12} $h={14} viewBox="0 0 12 14">
    <path d="M10 1v12L3 7z" fill="#a8aaac" stroke="none" />
    {bar && <path d="M1.5 0v14" stroke="#a8aaac" />}
  </Svg>
)

const tasks = [
  { icon: <Firefox />, text: ['FRITZ!Repeater - Mozilla Firefox'] },
  { icon: <Firefox />, text: ['LibreOffice-Forum - Antwort', 'erstellen - Mozilla Firefox'] },
  { icon: <Firefox />, text: ['Diagrammachse bearbeiten -', 'Mozilla Firefox'] },
  { icon: <CalcIcon w={22} h={29} />, text: ['2.VersTESTgewichtlfdjahr.ods -', 'LibreOffice Calc'], on: true },
  { icon: <Thunderbird />, text: ['Posteingang - mehl@iesy.net -', 'Mozilla Thunderbird'] },
]

export default function App() {
  return (
    <Desktop>
      <GlobalStyle />
      <Workspace>
        <WallpaperArt />
        <Toolbox><Bars $color="#2b3b38" /></Toolbox>
        <Window>
          <TitleBar>
            <CalcIcon w={14} h={18} />
            <Svg $w={14} $h={14} viewBox="0 0 14 14">
              <path d="M8 1l5 5-2 1-2.500 2.500-.5 2-4-4 2-.5L8.500 4.500z" fill="#eff0f1" stroke="none" />
              <path d="M4 10l-3 3" stroke="#eff0f1" />
            </Svg>
            <TitleText>2.VersTESTgewichtlfdjahr.ods - LibreOffice Calc</TitleText>
            <TitleButtons>
              <Svg $w={18} $h={18} viewBox="0 0 18 18"><path d="M4 7l5 5 5-5" stroke="#eff0f1" /></Svg>
              <Svg $w={18} $h={18} viewBox="0 0 18 18"><path d="M4 11l5-5 5 5" stroke="#eff0f1" /></Svg>
              <Svg $w={18} $h={18} viewBox="0 0 18 18">
                <circle cx="9" cy="9" r="9" fill="#fcfcfc" stroke="none" />
                <path d="M5.500 5.500l7 7M12.500 5.500l-7 7" stroke="#31363b" />
              </Svg>
            </TitleButtons>
          </TitleBar>
          <MenuBar>
            {['Datei', 'Bearbeiten', 'Ansicht', 'Einfügen', 'Format', 'Vorlagen', 'Tabelle', 'Daten', 'Extras', 'Fenster', 'Hilfe'].map(m => (
              <span key={m}>{m}</span>
            ))}
          </MenuBar>
          <ToolbarGroup>
            <Toolbar $h={36} $pad={8.5}>{renderBar(bar1)}</Toolbar>
            <Toolbar $h={39} $pad={10} $top={3}>
              <Combo $w={133} $mr={10}>Liberation Sans<ChevronDown /></Combo>
              <Combo $w={61} $mr={1}>10<ChevronDown /></Combo>
              {renderBar(bar2)}
            </Toolbar>
          </ToolbarGroup>
          <Body>
            <LeftCol>
              <FormulaRow>
                <Combo $w={137} $h={27}>A1<ChevronDown /></Combo>
                <Sep />
                <FormulaBtn $w={24}><Svg $w={20} $h={20} viewBox="0 0 20 20"><T x={7} y={15} s={15} c="#31363b">f</T><T x={13} y={16} s={9} c="#31363b">x</T></Svg></FormulaBtn>
                <FormulaBtn $w={28}><Svg $w={18} $h={18} viewBox="0 0 18 18"><path d="M15 3H3.500L9.500 9l-6 6H15" /></Svg></FormulaBtn>
                <Drop />
                <FormulaBtn $w={25} $size={17}>=</FormulaBtn>
                <Sep />
                <FormulaBox>Datum</FormulaBox>
                <ExpandArrow />
              </FormulaRow>
              <SheetRow>
                <SheetGrid />
                <VScroll>
                  <SplitBtn />
                  <VTrack><VThumb /></VTrack>
                </VScroll>
              </SheetRow>
              <HScrollRow>
                <HTrack><HThumb /></HTrack>
                <SplitV />
              </HScrollRow>
              <TabRow>
                <NavBtn><NavIcon bar /></NavBtn>
                <NavBtn><NavIcon /></NavBtn>
                <NavBtn $flip><NavIcon /></NavBtn>
                <NavBtn $flip><NavIcon bar /></NavBtn>
                <NavBtn $w={37}>
                  <Svg $w={16} $h={16} viewBox="0 0 16 16"><path d="M8 0v16M0 8h16" strokeWidth="3" /></Svg>
                </NavBtn>
                <Tab $on $w={75}>Tabelle1</Tab>
                <Tab $w={71}>Tabelle2</Tab>
              </TabRow>
            </LeftCol>
            <Sidebar><DeckHandle /></Sidebar>
          </Body>
          <StatusBar>
            <StatusCell $w={379}>Tabelle 1 von 2</StatusCell>
            <StatusCell $w={222}>Standard</StatusCell>
            <StatusCell $w={264}>Deutsch (Deutschland)</StatusCell>
            <StatusCell $w={32}>I</StatusCell>
            <StatusCell $w={148}>
              <Svg $w={12} $h={14} viewBox="0 0 12 14"><path d="M1.500 1.500h9v11h-9zM4 1.500v4h4v-4" stroke={R} /></Svg>
            </StatusCell>
            <StatusCell $w={234}>Mittelwert: ; Summe: 0</StatusCell>
            <StatusCell $w={134}>−<ZoomLine />+</StatusCell>
            <StatusCell $w={40}>148 %</StatusCell>
          </StatusBar>
        </Window>
        <MouseCursor viewBox="0 0 14 20">
          <path d="M1 0l12 13-5 .5 3.500 5-2.500 1.200-3.500-5.200L1 18z" fill="#3c3f42" stroke="#fcfcfc" strokeWidth=".6" />
        </MouseCursor>
      </Workspace>
      <Panel>
        <PanelSheen />
        <KdeLogo />
        <Pager>
          <Desk $bg="#6cbce4" $pad><DeskWindow $bg="#4f93b8" $border="#3f7898" $dot="#3ba4b4" /></Desk>
          <Desk $bg="#b0bcbb" $border="#6a7575" $pad><DeskWindow $bg="#a9b6b6" $border="#a9b6b6" $dot="#33b67c" /></Desk>
          <Desk $bg="#c3cfce" />
          <Desk $bg="#6d7676" $border="#2f3436" $pad><DeskWindow $bg="#5f686a" $border="#3a4042" $dot="#2f86cf" /></Desk>
        </Pager>
        <NotesBox><Notes /></NotesBox>
        <Tasks>
          {tasks.map(t => (
            <Task key={t.text[0]} $on={t.on}>
              <TaskIconBox>{t.icon}</TaskIconBox>
              <div>{t.text.map(l => <div key={l}>{l}</div>)}</div>
            </Task>
          ))}
        </Tasks>
        <Tray>
          <TrayItem>
            <Svg $w={16} $h={16} viewBox="0 0 16 16"><path d="M0 0h6v16H0zM10 0h6v16h-6z" fill={D} stroke="none" /></Svg>
          </TrayItem>
          <TrayItem>DE</TrayItem>
          <TrayItem>
            <Svg $w={18} $h={18} viewBox="0 0 18 18">
              <path d="M5 1.500h12.500V14H5M.5 1.500h4v10h-4zM8 16.500h7M11.500 14v2.500" />
              <path d="M1.500 4h2M1.500 6h2" />
            </Svg>
          </TrayItem>
          <TrayItem>
            <Svg $w={16} $h={18} viewBox="0 0 16 18">
              <rect x="1.5" y="2.5" width="13" height="15" />
              <path d="M4 1h8v3H4z" fill={D} stroke="none" />
              <path d="M4 8h8M4 11h8M4 14h5" />
            </Svg>
          </TrayItem>
          <TrayItem>
            <Svg $w={18} $h={18} viewBox="0 0 18 18">
              <path d="M1 6h3l5-4v14l-5-4H1z" fill={D} stroke="none" />
              <path d="M11 5q2 4 0 8M13.500 3q3 6 0 12" strokeWidth="1.2" />
            </Svg>
          </TrayItem>
          <TrayItem>
            <Svg $w={13} $h={8} viewBox="0 0 13 8"><path d="M6.500 0L13 7H0z" fill={D} stroke="none" /></Svg>
          </TrayItem>
        </Tray>
        <Clock>
          <ClockTime>08:25</ClockTime>
          <ClockDate>Dienstag, 16. Juni 2020</ClockDate>
        </Clock>
        <PanelMenu><Bars $color="#75807f" /></PanelMenu>
      </Panel>
    </Desktop>
  )
}
